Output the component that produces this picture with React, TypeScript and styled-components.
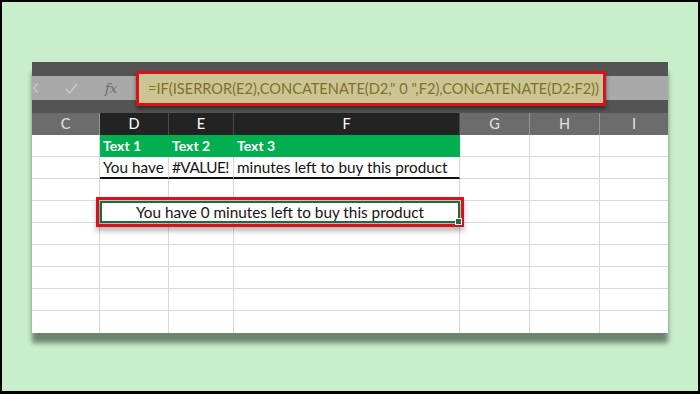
import React from "react";
import styled, { createGlobalStyle } from "styled-components";

const Global = createGlobalStyle`
  html, body { margin: 0; padding: 0; background: #000; }
  body { font-family: "Lato", "Open Sans", sans-serif; }
`;

const Frame = styled.div`
  width: 700px;
  height: 394px;
  box-sizing: border-box;
  padding: 2px 2px 3px 2px;
  background: #000;
`;

const Stage = styled.div`
  width: 100%;
  height: 100%;
  background: #c8efca;
  box-sizing: border-box;
  padding: 60px 0 0 30px;
`;

const Panel = styled.div`
  width: 636px;
  display: flex;
  flex-direction: column;
  background: #fff;
  box-shadow: 0 10px 5px rgba(0, 0, 0, 0.45);
`;

const Band = styled.div<{ $h: number }>`
  height: ${(p) => p.$h}px;
  background: #545454;
`;

const FormulaBar = styled.div`
  height: 24px;
  background: #a9a9a9;
  display: flex;
  align-items: center;
`;

const Icon = styled.svg<{ $ml: number }>`
  flex: none;
  margin-left: ${(p) => p.$ml}px;
`;

const Fx = styled.span`
  flex: none;
  width: 13px;
  margin-left: 27px;
  font-family: "DejaVu Serif", "Liberation Serif", serif;
  font-style: italic;
  font-size: 13px;
  color: #6c6c6c;
  line-height: 1;
`;

const FormulaBox = styled.div`
  position: relative;
  z-index: 2;
  flex: none;
  margin-left: 18px;
  width: 470px;
  height: 35px;
  box-sizing: border-box;
  border: 3px solid #d4131c;
  background: #cbc593;
  color: #7f712c;
  font-size: 14.6px;
  line-height: 29px;
  padding-left: 9px;
  white-space: nowrap;
  box-shadow: 0 3px 4px rgba(0, 0, 0, 0.45);
`;

const Sheet = styled.div`
  display: grid;
  grid-template-columns: 68px 69px 65px 226px 70px 70px 68px;
  grid-auto-rows: 22px;
`;

const HeaderCell = styled.div<{ $sel?: boolean; $last?: boolean }>`
  background: ${(p) => (p.$sel ? "#232323" : "#6c6c6c")};
  color: ${(p) => (p.$sel ? "#ffffff" : "#e4e4e4")};
  border-right: ${(p) => (p.$last ? "none" : `1px solid ${p.$sel ? "#4a4a4a" : "#969696"}`)};
  font-size: 14.5px;
  line-height: 22px;
  text-align: center;
`;

const Cell = styled.div<{
  $green?: boolean;
  $thick?: boolean;
  $last?: boolean;
  $noBottom?: boolean;
  $tight?: boolean;
}>`
  box-sizing: border-box;
  background: ${(p) => (p.$green ? "#00b050" : "#fff")};
  color: ${(p) => (p.$green ? "#fff" : "#141414")};
  font-weight: ${(p) => (p.$green ? 700 : 400)};
  border-right: ${(p) => (p.$last || p.$green ? "none" : "1px solid #d9d9d9")};
  border-bottom: ${(p) =>
    p.$thick ? "2px solid #111" : p.$noBottom ? "none" : p.$green ? "none" : "1px solid #d9d9d9"};
  font-size: ${(p) => (p.$green ? "14px" : "15.3px")};
  letter-spacing: ${(p) => (p.$tight ? "-0.5px" : "normal")};
  line-height: 21px;
  padding-left: 3px;
  white-space: nowrap;
  overflow: hidden;
`;

const MergedCell = styled.div`
  position: relative;
  z-index: 1;
  grid-column: span 3;
  box-sizing: border-box;
  border: 2px solid #1f6b40;
  background: #fff;
  outline: 3px solid #d4131c;
  outline-offset: 1px;
  box-shadow: 0 4px 5px 4px rgba(0, 0, 0, 0.28);
  font-size: 15.3px;
  line-height: 19px;
  color: #141414;
  text-align: center;
  white-space: nowrap;
`;

const FillHandle = styled.span`
  position: absolute;
  right: -4px;
  bottom: -4px;
  width: 5px;
  height: 5px;
  background: #1f6b40;
  border: 1px solid #fff;
`;

const cols = ["C", "D", "E", "F", "G", "H", "I"];
const selectedCols = new Set(["D", "E", "F"]);

type RowData = { d?: string; e?: string; f?: string; green?: boolean; thick?: boolean };

const rows: (RowData | "merged")[] = [
  { d: "Text 1", e: "Text 2", f: "Text 3", green: true },
  { d: "You have", e: "#VALUE!", f: "minutes left to buy this product", thick: true },
  {},
  "merged",
  {},
  {},
  {},
  {},
  {},
];

export default function App() {
  return (
    <>
      <Global />
      <Frame>
        <Stage>
          <Panel>
            <Band $h={14} />
            <FormulaBar>
              <Icon $ml={1} width="5" height="10" viewBox="0 0 5 10">
                <polyline points="5,0 0.8,5 5,10" fill="none" stroke="#c6c6c6" strokeWidth="1.6" />
              </Icon>
              <Icon $ml={27} width="13" height="11" viewBox="0 0 13 11">
                <polyline points="1,6 4.5,10 12,1" fill="none" stroke="#c6c6c6" strokeWidth="1.8" />
              </Icon>
              <Fx>fx</Fx>
              <FormulaBox>=IF(ISERROR(E2),CONCATENATE(D2," 0 ",F2),CONCATENATE(D2:F2))</FormulaBox>
            </FormulaBar>
            <Band $h={13} />
            <Sheet>
              {cols.map((c, i) => (
                <HeaderCell key={c} $sel={selectedCols.has(c)} $last={i === cols.length - 1}>
                  {c}
                </HeaderCell>
              ))}
              {rows.map((r, ri) => {
                const lastRow = ri === rows.length - 1;
                if (r === "merged") {
                  return (
                    <React.Fragment key={ri}>
                      <Cell />
                      <MergedCell>
                        You have 0 minutes left to buy this product
                        <FillHandle />
                      </MergedCell>
                      <Cell />
                      <Cell />
                      <Cell $last />
                    </React.Fragment>
                  );
                }
                return (
                  <React.Fragment key={ri}>
                    <Cell $noBottom={lastRow} />
                    <Cell $green={r.green} $thick={r.thick} $noBottom={lastRow}>{r.d}</Cell>
                    <Cell $green={r.green} $thick={r.thick} $noBottom={lastRow} $tight={!r.green && !!r.e}>
                      {r.e}
                    </Cell>
                    <Cell $green={r.green} $thick={r.thick} $noBottom={lastRow}>{r.f}</Cell>
                    <Cell $noBottom={lastRow} />
                    <Cell $noBottom={lastRow} />
                    <Cell $last $noBottom={lastRow} />
                  </React.Fragment>
                );
              })}
            </Sheet>
          </Panel>
        </Stage>
      </Frame>
    </>
  );
}
